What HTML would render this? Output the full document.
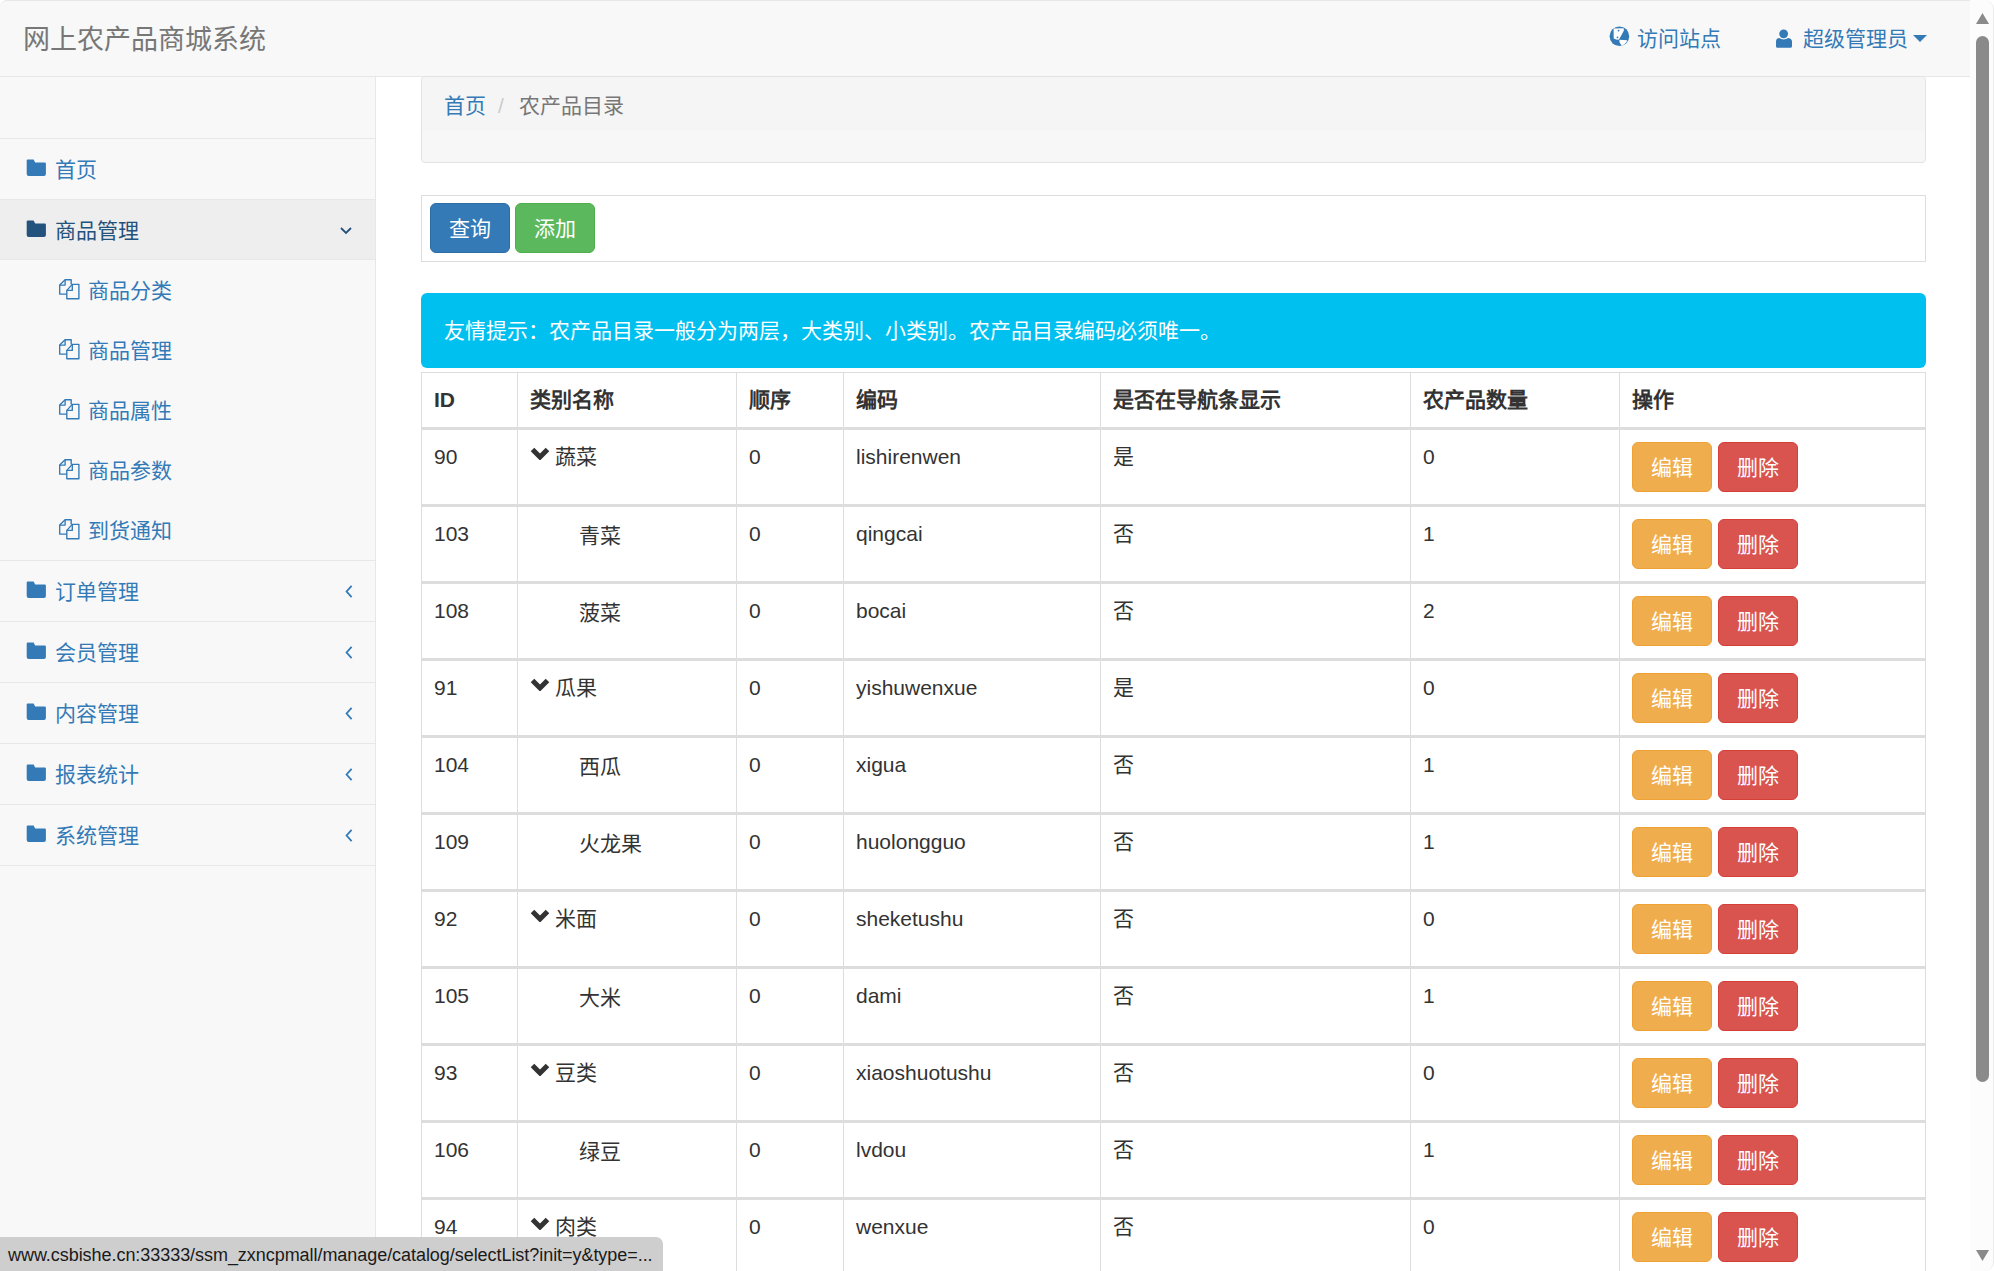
<!DOCTYPE html><html lang="zh-CN"><head><meta charset="utf-8"><style>
*{box-sizing:border-box;margin:0;padding:0}
html,body{width:1994px;height:1271px;overflow:hidden;background:#fff}
body{position:relative;font-family:"Liberation Sans",sans-serif;font-size:21px;color:#333;line-height:30px}
.a{position:absolute;white-space:nowrap}
.navbar{position:absolute;left:0;top:0;width:1970px;height:77px;background:#f8f8f8;border-top:1px solid #e7e7e7;border-bottom:1px solid #e7e7e7;border-radius:7px 0 0 0}
.brand{left:23px;top:25px;font-size:27px;color:#777;line-height:30px}
.nlink{color:#337ab7;font-size:21px;line-height:30px;top:24px}
.sidebar{position:absolute;left:0;top:77px;width:376px;height:1194px;background:#f8f8f8;border-right:1px solid #e7e7e7}
.sep{position:absolute;left:0;width:375px;height:1px;background:#e7e7e7}
.sitem{position:absolute;left:55px;color:#337ab7;line-height:30px}
.sub{left:88px}
.ico{position:absolute}
.bc{position:absolute;left:421px;top:76px;width:1505px;height:87px;background:#f7f7f7;border:1px solid #e3e3e3;border-radius:4px;overflow:hidden}
.bc1{position:absolute;left:0;top:0;width:1503px;height:54px;background:#f5f5f5}
.tool{position:absolute;left:421px;top:195px;width:1505px;height:67px;border:1px solid #ddd}
.btn{position:absolute;height:50px;color:#fff;text-align:center;line-height:50px;font-size:21px;border-radius:6px;border:1px solid}
.alert{position:absolute;left:421px;top:293px;width:1505px;height:75px;background:#00c0ef;border-radius:6px;color:#fff;line-height:75px;padding-left:23px}
.hl{position:absolute;background:#ddd}
.cell{position:absolute;line-height:30px;color:#333}
.th{font-weight:bold}
.bw{background:#f0ad4e;border-color:#eea236}
.bd{background:#d9534f;border-color:#d43f3a}
.scroll{position:absolute;left:1970px;top:0;width:24px;height:1271px;background:#fcfcfc;border-right:1px solid #ececec;border-radius:0 9px 9px 0}
.status{position:absolute;left:0;top:1237px;width:663px;height:34px;background:#cecece;border-radius:0 7px 0 0;font-size:18px;line-height:34px;color:#1a1a1a;padding-left:8px;padding-top:1px;letter-spacing:-0.05px;white-space:nowrap}
</style></head><body>
<div class="navbar"></div>
<div class="a brand">网上农产品商城系统</div>
<svg class="ico" style="left:1604px;top:22px" width="30" height="28" viewBox="0 0 30 28"><circle cx="15.4" cy="14.2" r="9.8" fill="#337ab7"/><path d="M9.6 6.4L19.7 6.2L19.9 8.6L17.8 12.4L15.7 16.2L14.6 17.7L12.2 17.4L9.7 16.6Z" fill="#fff"/><path d="M15.3 17.8L23.3 18.2C22.5 20.5 20.5 22.6 17.6 23.6L15.6 20.6Z" fill="#fff"/><circle cx="14.6" cy="8.6" r="0.9" fill="#337ab7"/><circle cx="13.5" cy="15.3" r="0.9" fill="#337ab7"/></svg>
<div class="a nlink" style="left:1637px">访问站点</div>
<svg class="ico" style="left:1770px;top:24px" width="30" height="28" viewBox="0 0 30 28"><circle cx="13.65" cy="9.8" r="4.4" fill="#337ab7"/><path d="M6 17.6C6 15.5 7.3 14.1 9.2 14.1C10.4 15 12 15.4 13.65 15.4S16.9 15 18.1 14.1C20 14.1 22 15.5 22 17.6V22.3C22 23.2 21.4 23.8 20.5 23.8H7.5C6.6 23.8 6 23.2 6 22.3Z" fill="#337ab7"/></svg>
<div class="a nlink" style="left:1803px">超级管理员</div>
<svg class="ico" style="left:1913px;top:35px" width="14" height="8" viewBox="0 0 14 8"><path d="M0 0H14L7 7z" fill="#337ab7"/></svg>
<div class="sidebar"></div>
<div class="sep" style="top:138px"></div>
<div class="sep" style="top:199px"></div>
<div class="sep" style="top:259px"></div>
<div class="sep" style="top:560px"></div>
<div class="sep" style="top:621px"></div>
<div class="sep" style="top:682px"></div>
<div class="sep" style="top:743px"></div>
<div class="sep" style="top:804px"></div>
<div class="sep" style="top:865px"></div>
<div class="a" style="left:0;top:200px;width:375px;height:59px;background:#eeeeee"></div>
<svg class="ico" style="left:26px;top:159px" width="22" height="19" viewBox="0 0 22 19"><path d="M0.7 1.6Q0.7 0.5 1.8 0.5H7.6L9.2 3.6H18.8Q19.9 3.6 19.9 4.8V14.9Q19.9 16.9 17.9 16.9H2.7Q0.7 16.9 0.7 14.9Z" fill="#337ab7"/></svg>
<div class="sitem" style="top:155px;color:#337ab7">首页</div>
<svg class="ico" style="left:26px;top:220px" width="22" height="19" viewBox="0 0 22 19"><path d="M0.7 1.6Q0.7 0.5 1.8 0.5H7.6L9.2 3.6H18.8Q19.9 3.6 19.9 4.8V14.9Q19.9 16.9 17.9 16.9H2.7Q0.7 16.9 0.7 14.9Z" fill="#23527c"/></svg>
<div class="sitem" style="top:216px;color:#23527c">商品管理</div>
<svg class="ico" style="left:340px;top:227px" width="12" height="8" viewBox="0 0 12 8"><path d="M1 1L6 6L11 1" fill="none" stroke="#23527c" stroke-width="1.8"/></svg>
<svg class="ico" style="left:26px;top:581px" width="22" height="19" viewBox="0 0 22 19"><path d="M0.7 1.6Q0.7 0.5 1.8 0.5H7.6L9.2 3.6H18.8Q19.9 3.6 19.9 4.8V14.9Q19.9 16.9 17.9 16.9H2.7Q0.7 16.9 0.7 14.9Z" fill="#337ab7"/></svg>
<div class="sitem" style="top:577px;color:#337ab7">订单管理</div>
<svg class="ico" style="left:345px;top:585px" width="8" height="13" viewBox="0 0 8 13"><path d="M6.6 0.9L1.6 6.5L6.6 12.1" fill="none" stroke="#337ab7" stroke-width="1.8"/></svg>
<svg class="ico" style="left:26px;top:642px" width="22" height="19" viewBox="0 0 22 19"><path d="M0.7 1.6Q0.7 0.5 1.8 0.5H7.6L9.2 3.6H18.8Q19.9 3.6 19.9 4.8V14.9Q19.9 16.9 17.9 16.9H2.7Q0.7 16.9 0.7 14.9Z" fill="#337ab7"/></svg>
<div class="sitem" style="top:638px;color:#337ab7">会员管理</div>
<svg class="ico" style="left:345px;top:646px" width="8" height="13" viewBox="0 0 8 13"><path d="M6.6 0.9L1.6 6.5L6.6 12.1" fill="none" stroke="#337ab7" stroke-width="1.8"/></svg>
<svg class="ico" style="left:26px;top:703px" width="22" height="19" viewBox="0 0 22 19"><path d="M0.7 1.6Q0.7 0.5 1.8 0.5H7.6L9.2 3.6H18.8Q19.9 3.6 19.9 4.8V14.9Q19.9 16.9 17.9 16.9H2.7Q0.7 16.9 0.7 14.9Z" fill="#337ab7"/></svg>
<div class="sitem" style="top:699px;color:#337ab7">内容管理</div>
<svg class="ico" style="left:345px;top:707px" width="8" height="13" viewBox="0 0 8 13"><path d="M6.6 0.9L1.6 6.5L6.6 12.1" fill="none" stroke="#337ab7" stroke-width="1.8"/></svg>
<svg class="ico" style="left:26px;top:764px" width="22" height="19" viewBox="0 0 22 19"><path d="M0.7 1.6Q0.7 0.5 1.8 0.5H7.6L9.2 3.6H18.8Q19.9 3.6 19.9 4.8V14.9Q19.9 16.9 17.9 16.9H2.7Q0.7 16.9 0.7 14.9Z" fill="#337ab7"/></svg>
<div class="sitem" style="top:760px;color:#337ab7">报表统计</div>
<svg class="ico" style="left:345px;top:768px" width="8" height="13" viewBox="0 0 8 13"><path d="M6.6 0.9L1.6 6.5L6.6 12.1" fill="none" stroke="#337ab7" stroke-width="1.8"/></svg>
<svg class="ico" style="left:26px;top:825px" width="22" height="19" viewBox="0 0 22 19"><path d="M0.7 1.6Q0.7 0.5 1.8 0.5H7.6L9.2 3.6H18.8Q19.9 3.6 19.9 4.8V14.9Q19.9 16.9 17.9 16.9H2.7Q0.7 16.9 0.7 14.9Z" fill="#337ab7"/></svg>
<div class="sitem" style="top:821px;color:#337ab7">系统管理</div>
<svg class="ico" style="left:345px;top:829px" width="8" height="13" viewBox="0 0 8 13"><path d="M6.6 0.9L1.6 6.5L6.6 12.1" fill="none" stroke="#337ab7" stroke-width="1.8"/></svg>
<svg class="ico" style="left:52px;top:272px" width="40" height="34" viewBox="0 0 40 34"><g fill="none" stroke="#337ab7" stroke-width="1.35" stroke-linejoin="round"><path d="M14.8 22.1H7.7V13.1L13.1 7.7H19.2V12.4"/><path d="M7.7 13.1H13.1V7.7"/><path d="M14.8 18.4L20.3 12.4H26.9V26.7H14.8Z"/><path d="M14.8 18.4H20.3V12.4"/></g></svg>
<div class="sitem sub" style="top:276px">商品分类</div>
<svg class="ico" style="left:52px;top:332px" width="40" height="34" viewBox="0 0 40 34"><g fill="none" stroke="#337ab7" stroke-width="1.35" stroke-linejoin="round"><path d="M14.8 22.1H7.7V13.1L13.1 7.7H19.2V12.4"/><path d="M7.7 13.1H13.1V7.7"/><path d="M14.8 18.4L20.3 12.4H26.9V26.7H14.8Z"/><path d="M14.8 18.4H20.3V12.4"/></g></svg>
<div class="sitem sub" style="top:336px">商品管理</div>
<svg class="ico" style="left:52px;top:392px" width="40" height="34" viewBox="0 0 40 34"><g fill="none" stroke="#337ab7" stroke-width="1.35" stroke-linejoin="round"><path d="M14.8 22.1H7.7V13.1L13.1 7.7H19.2V12.4"/><path d="M7.7 13.1H13.1V7.7"/><path d="M14.8 18.4L20.3 12.4H26.9V26.7H14.8Z"/><path d="M14.8 18.4H20.3V12.4"/></g></svg>
<div class="sitem sub" style="top:396px">商品属性</div>
<svg class="ico" style="left:52px;top:452px" width="40" height="34" viewBox="0 0 40 34"><g fill="none" stroke="#337ab7" stroke-width="1.35" stroke-linejoin="round"><path d="M14.8 22.1H7.7V13.1L13.1 7.7H19.2V12.4"/><path d="M7.7 13.1H13.1V7.7"/><path d="M14.8 18.4L20.3 12.4H26.9V26.7H14.8Z"/><path d="M14.8 18.4H20.3V12.4"/></g></svg>
<div class="sitem sub" style="top:456px">商品参数</div>
<svg class="ico" style="left:52px;top:512px" width="40" height="34" viewBox="0 0 40 34"><g fill="none" stroke="#337ab7" stroke-width="1.35" stroke-linejoin="round"><path d="M14.8 22.1H7.7V13.1L13.1 7.7H19.2V12.4"/><path d="M7.7 13.1H13.1V7.7"/><path d="M14.8 18.4L20.3 12.4H26.9V26.7H14.8Z"/><path d="M14.8 18.4H20.3V12.4"/></g></svg>
<div class="sitem sub" style="top:516px">到货通知</div>
<div class="bc"><div class="bc1"></div></div>
<div class="a" style="left:444px;top:91px;color:#337ab7">首页</div>
<div class="a" style="left:498px;top:91px;color:#ccc">/</div>
<div class="a" style="left:519px;top:91px;color:#777">农产品目录</div>
<div class="tool"></div>
<div class="btn" style="left:430px;top:203px;width:80px;background:#337ab7;border-color:#2e6da4">查询</div>
<div class="btn" style="left:515px;top:203px;width:80px;background:#5cb85c;border-color:#4cae4c">添加</div>
<div class="alert">友情提示：农产品目录一般分为两层，大类别、小类别。农产品目录编码必须唯一。</div>
<div class="hl" style="left:421px;top:372px;width:1505px;height:1px"></div>
<div class="hl" style="left:421px;top:372px;width:1px;height:899px"></div>
<div class="hl" style="left:517px;top:372px;width:1px;height:899px"></div>
<div class="hl" style="left:736px;top:372px;width:1px;height:899px"></div>
<div class="hl" style="left:843px;top:372px;width:1px;height:899px"></div>
<div class="hl" style="left:1100px;top:372px;width:1px;height:899px"></div>
<div class="hl" style="left:1410px;top:372px;width:1px;height:899px"></div>
<div class="hl" style="left:1619px;top:372px;width:1px;height:899px"></div>
<div class="hl" style="left:1925px;top:372px;width:1px;height:899px"></div>
<div class="hl" style="left:421px;top:427px;width:1505px;height:3px"></div>
<div class="hl" style="left:421px;top:504px;width:1505px;height:3px"></div>
<div class="hl" style="left:421px;top:581px;width:1505px;height:3px"></div>
<div class="hl" style="left:421px;top:658px;width:1505px;height:3px"></div>
<div class="hl" style="left:421px;top:735px;width:1505px;height:3px"></div>
<div class="hl" style="left:421px;top:812px;width:1505px;height:3px"></div>
<div class="hl" style="left:421px;top:889px;width:1505px;height:3px"></div>
<div class="hl" style="left:421px;top:966px;width:1505px;height:3px"></div>
<div class="hl" style="left:421px;top:1043px;width:1505px;height:3px"></div>
<div class="hl" style="left:421px;top:1120px;width:1505px;height:3px"></div>
<div class="hl" style="left:421px;top:1197px;width:1505px;height:3px"></div>
<div class="hl" style="left:421px;top:1274px;width:1505px;height:3px"></div>
<div class="cell th" style="left:434px;top:385px">ID</div>
<div class="cell th" style="left:530px;top:385px">类别名称</div>
<div class="cell th" style="left:749px;top:385px">顺序</div>
<div class="cell th" style="left:856px;top:385px">编码</div>
<div class="cell th" style="left:1113px;top:385px">是否在导航条显示</div>
<div class="cell th" style="left:1423px;top:385px">农产品数量</div>
<div class="cell th" style="left:1632px;top:385px">操作</div>
<div class="cell" style="left:434px;top:442px">90</div>
<svg class="ico" style="left:530px;top:447px" width="20" height="13" viewBox="0 0 20 13"><path d="M2.5 2.5L10 10L17.5 2.5" fill="none" stroke="#333" stroke-width="5"/></svg>
<div class="cell" style="left:555px;top:442px">蔬菜</div>
<div class="cell" style="left:749px;top:442px">0</div>
<div class="cell" style="left:856px;top:442px">lishirenwen</div>
<div class="cell" style="left:1113px;top:442px">是</div>
<div class="cell" style="left:1423px;top:442px">0</div>
<div class="btn bw" style="left:1632px;top:442px;width:80px">编辑</div>
<div class="btn bd" style="left:1718px;top:442px;width:80px">删除</div>
<div class="cell" style="left:434px;top:519px">103</div>
<div class="cell" style="left:579px;top:521px">青菜</div>
<div class="cell" style="left:749px;top:519px">0</div>
<div class="cell" style="left:856px;top:519px">qingcai</div>
<div class="cell" style="left:1113px;top:519px">否</div>
<div class="cell" style="left:1423px;top:519px">1</div>
<div class="btn bw" style="left:1632px;top:519px;width:80px">编辑</div>
<div class="btn bd" style="left:1718px;top:519px;width:80px">删除</div>
<div class="cell" style="left:434px;top:596px">108</div>
<div class="cell" style="left:579px;top:598px">菠菜</div>
<div class="cell" style="left:749px;top:596px">0</div>
<div class="cell" style="left:856px;top:596px">bocai</div>
<div class="cell" style="left:1113px;top:596px">否</div>
<div class="cell" style="left:1423px;top:596px">2</div>
<div class="btn bw" style="left:1632px;top:596px;width:80px">编辑</div>
<div class="btn bd" style="left:1718px;top:596px;width:80px">删除</div>
<div class="cell" style="left:434px;top:673px">91</div>
<svg class="ico" style="left:530px;top:678px" width="20" height="13" viewBox="0 0 20 13"><path d="M2.5 2.5L10 10L17.5 2.5" fill="none" stroke="#333" stroke-width="5"/></svg>
<div class="cell" style="left:555px;top:673px">瓜果</div>
<div class="cell" style="left:749px;top:673px">0</div>
<div class="cell" style="left:856px;top:673px">yishuwenxue</div>
<div class="cell" style="left:1113px;top:673px">是</div>
<div class="cell" style="left:1423px;top:673px">0</div>
<div class="btn bw" style="left:1632px;top:673px;width:80px">编辑</div>
<div class="btn bd" style="left:1718px;top:673px;width:80px">删除</div>
<div class="cell" style="left:434px;top:750px">104</div>
<div class="cell" style="left:579px;top:752px">西瓜</div>
<div class="cell" style="left:749px;top:750px">0</div>
<div class="cell" style="left:856px;top:750px">xigua</div>
<div class="cell" style="left:1113px;top:750px">否</div>
<div class="cell" style="left:1423px;top:750px">1</div>
<div class="btn bw" style="left:1632px;top:750px;width:80px">编辑</div>
<div class="btn bd" style="left:1718px;top:750px;width:80px">删除</div>
<div class="cell" style="left:434px;top:827px">109</div>
<div class="cell" style="left:579px;top:829px">火龙果</div>
<div class="cell" style="left:749px;top:827px">0</div>
<div class="cell" style="left:856px;top:827px">huolongguo</div>
<div class="cell" style="left:1113px;top:827px">否</div>
<div class="cell" style="left:1423px;top:827px">1</div>
<div class="btn bw" style="left:1632px;top:827px;width:80px">编辑</div>
<div class="btn bd" style="left:1718px;top:827px;width:80px">删除</div>
<div class="cell" style="left:434px;top:904px">92</div>
<svg class="ico" style="left:530px;top:909px" width="20" height="13" viewBox="0 0 20 13"><path d="M2.5 2.5L10 10L17.5 2.5" fill="none" stroke="#333" stroke-width="5"/></svg>
<div class="cell" style="left:555px;top:904px">米面</div>
<div class="cell" style="left:749px;top:904px">0</div>
<div class="cell" style="left:856px;top:904px">sheketushu</div>
<div class="cell" style="left:1113px;top:904px">否</div>
<div class="cell" style="left:1423px;top:904px">0</div>
<div class="btn bw" style="left:1632px;top:904px;width:80px">编辑</div>
<div class="btn bd" style="left:1718px;top:904px;width:80px">删除</div>
<div class="cell" style="left:434px;top:981px">105</div>
<div class="cell" style="left:579px;top:983px">大米</div>
<div class="cell" style="left:749px;top:981px">0</div>
<div class="cell" style="left:856px;top:981px">dami</div>
<div class="cell" style="left:1113px;top:981px">否</div>
<div class="cell" style="left:1423px;top:981px">1</div>
<div class="btn bw" style="left:1632px;top:981px;width:80px">编辑</div>
<div class="btn bd" style="left:1718px;top:981px;width:80px">删除</div>
<div class="cell" style="left:434px;top:1058px">93</div>
<svg class="ico" style="left:530px;top:1063px" width="20" height="13" viewBox="0 0 20 13"><path d="M2.5 2.5L10 10L17.5 2.5" fill="none" stroke="#333" stroke-width="5"/></svg>
<div class="cell" style="left:555px;top:1058px">豆类</div>
<div class="cell" style="left:749px;top:1058px">0</div>
<div class="cell" style="left:856px;top:1058px">xiaoshuotushu</div>
<div class="cell" style="left:1113px;top:1058px">否</div>
<div class="cell" style="left:1423px;top:1058px">0</div>
<div class="btn bw" style="left:1632px;top:1058px;width:80px">编辑</div>
<div class="btn bd" style="left:1718px;top:1058px;width:80px">删除</div>
<div class="cell" style="left:434px;top:1135px">106</div>
<div class="cell" style="left:579px;top:1137px">绿豆</div>
<div class="cell" style="left:749px;top:1135px">0</div>
<div class="cell" style="left:856px;top:1135px">lvdou</div>
<div class="cell" style="left:1113px;top:1135px">否</div>
<div class="cell" style="left:1423px;top:1135px">1</div>
<div class="btn bw" style="left:1632px;top:1135px;width:80px">编辑</div>
<div class="btn bd" style="left:1718px;top:1135px;width:80px">删除</div>
<div class="cell" style="left:434px;top:1212px">94</div>
<svg class="ico" style="left:530px;top:1217px" width="20" height="13" viewBox="0 0 20 13"><path d="M2.5 2.5L10 10L17.5 2.5" fill="none" stroke="#333" stroke-width="5"/></svg>
<div class="cell" style="left:555px;top:1212px">肉类</div>
<div class="cell" style="left:749px;top:1212px">0</div>
<div class="cell" style="left:856px;top:1212px">wenxue</div>
<div class="cell" style="left:1113px;top:1212px">否</div>
<div class="cell" style="left:1423px;top:1212px">0</div>
<div class="btn bw" style="left:1632px;top:1212px;width:80px">编辑</div>
<div class="btn bd" style="left:1718px;top:1212px;width:80px">删除</div>
<div class="scroll"></div>
<svg class="ico" style="left:1976px;top:13px" width="13" height="11" viewBox="0 0 13 11"><path d="M6.5 0L13 11H0z" fill="#8a8a8a"/></svg>
<div class="a" style="left:1976px;top:36px;width:13px;height:1046px;background:#8a8a8a;border-radius:7px"></div>
<svg class="ico" style="left:1976px;top:1250px" width="13" height="11" viewBox="0 0 13 11"><path d="M0 0H13L6.5 11z" fill="#8a8a8a"/></svg>
<div class="status">www.csbishe.cn:33333/ssm_zxncpmall/manage/catalog/selectList?init=y&amp;type=...</div>
</body></html>
